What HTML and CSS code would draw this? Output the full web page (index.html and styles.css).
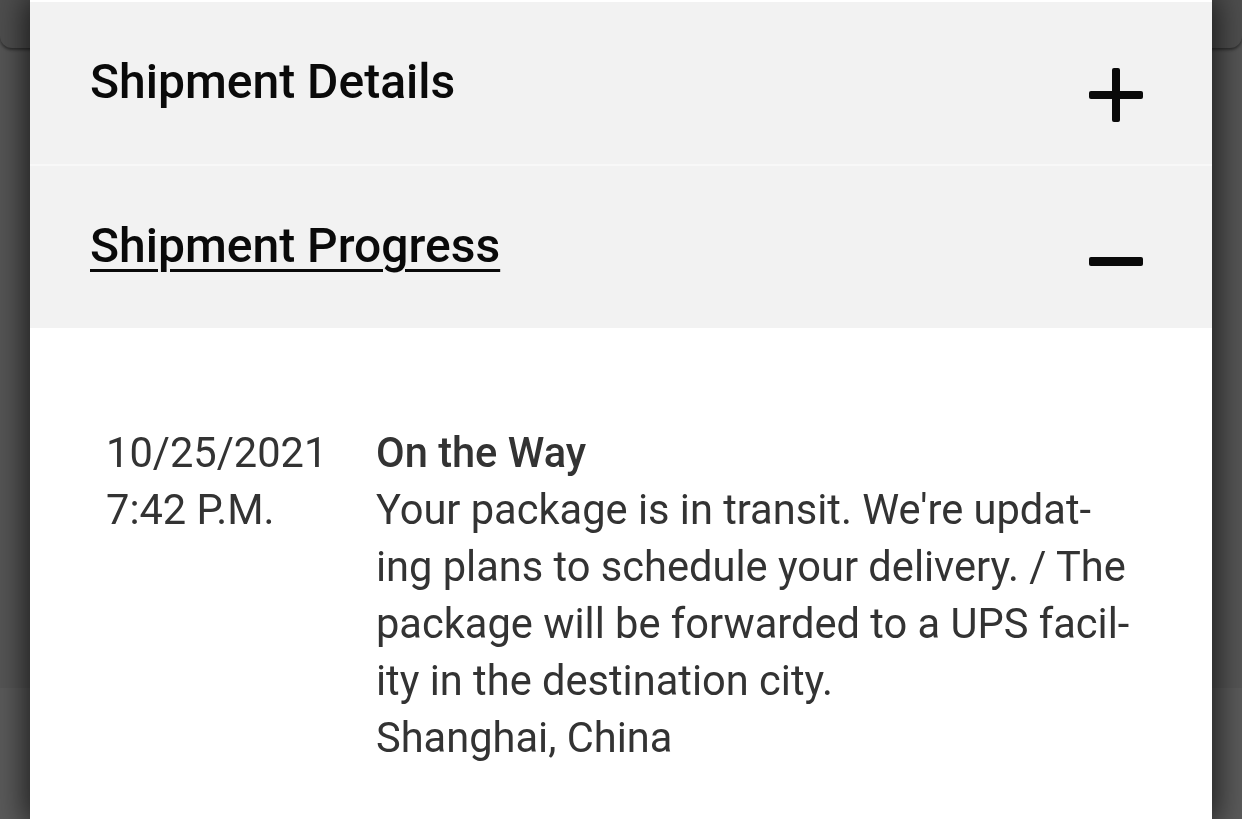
FILE: index.html
```html
<!DOCTYPE html>
<html lang="en">
<head>
    <meta charset="UTF-8">
    <meta name="viewport" content="width=device-width, initial-scale=1.0">
    <title>Shipment Progress</title>
    <link rel="stylesheet" href="styles.css">
</head>
<body>
    <!-- page underneath the dialog -->
    <div class="page">
        <div class="page-card"></div>
        <div class="page-body"></div>
        <div class="page-footer"></div>
    </div>

    <div class="overlay">
        <div class="sheet">
            <div class="acc-header">
                <h2 class="acc-title">Shipment Details</h2>
                <span class="acc-icon plus"></span>
            </div>
            <div class="acc-header">
                <h2 class="acc-title open">Shipment Progress</h2>
                <span class="acc-icon minus"></span>
            </div>

            <div class="progress">
                <div class="progress-row">
                    <div class="progress-date">10/25/2021<br>7:42 P.M.</div>
                    <div class="progress-info">
                        <div class="progress-status">On the Way</div>
                        <div class="progress-text">Your package is in transit. We're updat&shy;ing plans to schedule your delivery. / The package will be forwarded to a UPS facil&shy;ity in the destination city.</div>
                        <div class="progress-place">Shanghai, China</div>
                    </div>
                </div>
            </div>
        </div>
    </div>
</body>
</html>
```

FILE: styles.css
```css
html, body {
    margin: 0;
    height: 100%;
    overflow: hidden;
}

body {
    font-family: Roboto, "Liberation Sans", sans-serif;
    background: #555555;
}

.page {
    display: flex;
    flex-direction: column;
    height: 100%;
}

.page-card {
    height: 48px;
    flex-shrink: 0;
    background: #4e4e4e;
    border-radius: 0 0 12px 12px;
    box-shadow: 0 2px 3px rgba(0, 0, 0, 0.45);
}

.page-body {
    flex: 1;
}

.page-footer {
    height: 131px;
    background: #5a5a5a;
}

.overlay {
    position: fixed;
    top: 0;
    left: 0;
    right: 0;
    bottom: 0;
    display: flex;
    justify-content: center;
}

.sheet {
    width: 1182px;
    height: 100%;
    padding-top: 2px;
    background: #ffffff;
    box-shadow: 0 0 30px 4px rgba(0, 0, 0, 0.7);
}

.acc-header {
    display: flex;
    justify-content: space-between;
    height: 162px;
    padding: 0 69px 0 60px;
    background: #f2f2f2;
}

.acc-header + .acc-header {
    border-top: 2px solid #f8f8f8;
}

.acc-title {
    margin: 52px 0 0;
    font-size: 48px;
    font-weight: 500;
    line-height: 56px;
    color: #0a0a0a;
}

.acc-title.open {
    text-decoration: underline;
    text-decoration-thickness: 3px;
    text-underline-offset: 7px;
}

.acc-icon {
    position: relative;
    width: 54px;
    height: 54px;
    margin-top: 66px;
}

.acc-icon::before,
.acc-icon::after {
    content: "";
    position: absolute;
    background: #0a0a0a;
    border-radius: 2px;
}

.acc-icon::before {
    left: 0;
    right: 0;
    top: 23px;
    height: 8px;
}

.minus::before {
    top: 25px;
    height: 9px;
}

.plus::after {
    top: 0;
    bottom: 0;
    left: 23px;
    width: 8px;
}

.progress {
    padding: 96px 0 0 76px;
    color: #333333;
    font-size: 41.6px;
    line-height: 57px;
}

.progress-row {
    display: flex;
}

.progress-date {
    width: 270px;
    flex-shrink: 0;
}

.progress-info {
    width: 756px;
}

.progress-status {
    font-weight: 500;
}

.progress-text {
    hyphens: manual;
}
```
